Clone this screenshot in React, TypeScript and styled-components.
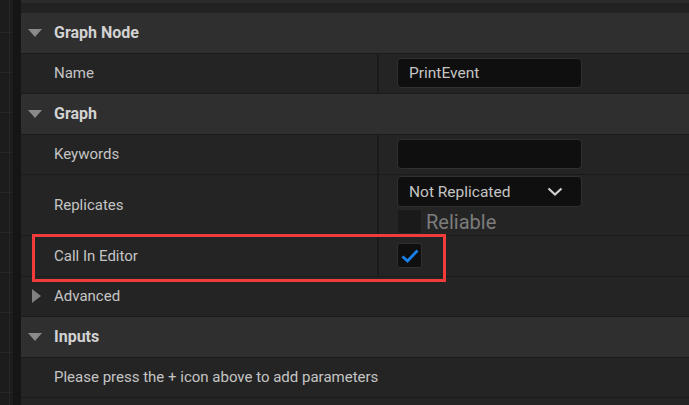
import React from "react";
import styled, { createGlobalStyle } from "styled-components";

const Global = createGlobalStyle`
  html, body { margin: 0; padding: 0; background: #1c1c1c; }
  body { font-family: Roboto, "Liberation Sans", sans-serif; overflow: hidden; }
  * { box-sizing: border-box; }
`;

const Page = styled.div`
  display: flex;
  width: 689px;
  height: 405px;
  overflow: hidden;
`;

const GridStrip = styled.div`
  width: 13px;
  flex: none;
  background-color: #1c1c1c;
  background-image:
    linear-gradient(to right, transparent 9px, #262626 9px, #262626 10px, transparent 10px),
    repeating-linear-gradient(to bottom, transparent 0, transparent 32px, #262626 32px, #262626 33px, transparent 33px, transparent 40px);
`;

const DarkBand = styled.div`
  width: 8px;
  flex: none;
  background: #151515;
`;

const Panel = styled.div`
  flex: 1;
  display: flex;
  flex-direction: column;
  background: #1b1b1b;
`;

const TopBar = styled.div`
  height: 13px;
  flex: none;
  background: #222222;
  border-top: 3px solid #2b2b2b;
`;

const Header = styled.div`
  height: 40.5px;
  flex: none;
  display: flex;
  align-items: center;
  padding-left: 7px;
  gap: 12px;
  background: #2f2f2f;
  border-bottom: 1.5px solid #1b1b1b;
  color: #d2d2d2;
  font-weight: 700;
  font-size: 16px;
`;

const DownArrow = styled.span`
  width: 0;
  height: 0;
  border-left: 7px solid transparent;
  border-right: 7px solid transparent;
  border-top: 8px solid #8a8a8a;
`;

const RightArrow = styled.span`
  width: 0;
  height: 0;
  border-top: 7.5px solid transparent;
  border-bottom: 7.5px solid transparent;
  border-left: 9px solid #808080;
`;

const Row = styled.div<{ $h?: number }>`
  position: relative;
  height: ${(p) => p.$h ?? 40.5}px;
  flex: none;
  display: grid;
  grid-template-columns: 356px 2px 1fr;
  background: #242424;
  border-bottom: 1.5px solid #1b1b1b;
`;

const PlainRow = styled.div`
  height: 40.5px;
  flex: none;
  display: flex;
  align-items: center;
  gap: 13px;
  padding-left: 11px;
  background: #242424;
  border-bottom: 1.5px solid #1b1b1b;
  color: #c4c4c4;
  font-size: 15px;
`;

const InfoRow = styled(PlainRow)`
  padding-left: 33px;
`;

const Label = styled.div`
  display: flex;
  align-items: center;
  padding-left: 33px;
  color: #c4c4c4;
  font-size: 15px;
`;

const Divider = styled.div`
  background: #1b1b1b;
`;

const Value = styled.div<{ $top?: boolean }>`
  display: flex;
  flex-direction: column;
  justify-content: ${(p) => (p.$top ? "flex-start" : "center")};
  gap: 2px;
  padding-left: 18px;
  padding-top: ${(p) => (p.$top ? 1 : 0)}px;
`;

const TextBox = styled.div`
  width: 185px;
  height: 30px;
  background: #0f0f0f;
  border: 1px solid #303030;
  border-radius: 4px;
  display: flex;
  align-items: center;
  padding-left: 11px;
  color: #c4c4c4;
  font-size: 15.5px;
`;

const Dropdown = styled(TextBox)`
  height: 31px;
  justify-content: space-between;
  padding-right: 18px;
`;

const CheckLine = styled.div`
  display: flex;
  align-items: center;
  gap: 4px;
`;

const CheckBox = styled.div<{ $dim?: boolean }>`
  width: 25px;
  height: 25px;
  border-radius: 3px;
  background: ${(p) => (p.$dim ? "#1a1a1a" : "#0f0f0f")};
  border: 1px solid ${(p) => (p.$dim ? "#262626" : "#303030")};
  display: flex;
  align-items: center;
  justify-content: center;
`;

const DimText = styled.span`
  color: #7c7c7c;
  font-size: 20px;
  line-height: 1;
`;

const Highlight = styled.div`
  position: absolute;
  left: 11px;
  top: -2px;
  width: 414px;
  height: 48px;
  border: 3px solid #f23c3c;
  pointer-events: none;
`;

const Chevron = () => (
  <svg width="16" height="9" viewBox="0 0 16 9">
    <path d="M1.5 1.5 L8 7.5 L14.5 1.5" fill="none" stroke="#d0d0d0" strokeWidth="2.2" />
  </svg>
);

const Tick = () => (
  <svg width="20" height="18" viewBox="0 0 20 18">
    <path d="M2.5 9.5 L7.5 14 L17.5 3.5" fill="none" stroke="#1a80ea" strokeWidth="2.8" />
  </svg>
);

export default function App() {
  return (
    <>
      <Global />
      <Page>
        <GridStrip />
        <DarkBand />
        <Panel>
          <TopBar />
          <Header>
            <DownArrow />
            Graph Node
          </Header>
          <Row>
            <Label>Name</Label>
            <Divider />
            <Value>
              <TextBox>PrintEvent</TextBox>
            </Value>
          </Row>
          <Header>
            <DownArrow />
            Graph
          </Header>
          <Row>
            <Label>Keywords</Label>
            <Divider />
            <Value>
              <TextBox />
            </Value>
          </Row>
          <Row $h={61}>
            <Label>Replicates</Label>
            <Divider />
            <Value $top>
              <Dropdown>
                Not Replicated
                <Chevron />
              </Dropdown>
              <CheckLine>
                <CheckBox $dim />
                <DimText>Reliable</DimText>
              </CheckLine>
            </Value>
          </Row>
          <Row>
            <Label>Call In Editor</Label>
            <Divider />
            <Value>
              <CheckBox>
                <Tick />
              </CheckBox>
            </Value>
            <Highlight />
          </Row>
          <PlainRow>
            <RightArrow />
            Advanced
          </PlainRow>
          <Header>
            <DownArrow />
            Inputs
          </Header>
          <InfoRow>Please press the + icon above to add parameters</InfoRow>
          <PlainRow />
        </Panel>
      </Page>
    </>
  );
}
